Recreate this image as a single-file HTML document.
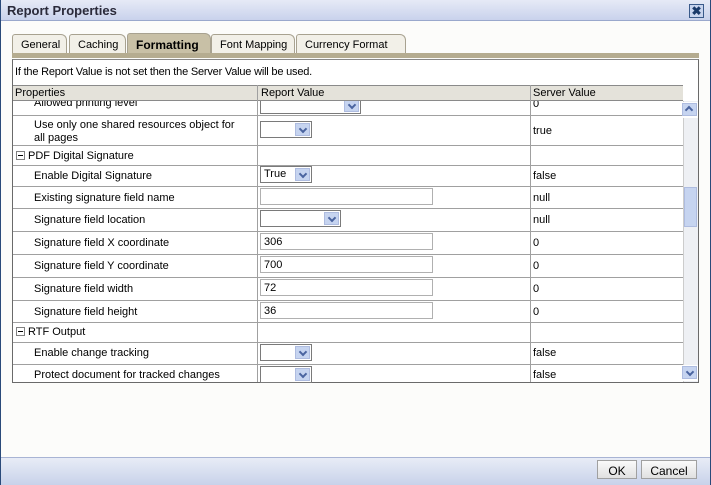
<!DOCTYPE html><html><head><style>
*{box-sizing:border-box;margin:0;padding:0}
body{width:711px;height:485px;overflow:hidden;font-family:"Liberation Sans",sans-serif;font-size:11px;color:#000;background:#fcfcfa;position:relative}
.a{position:absolute}
.win{left:0;top:0;width:711px;height:485px;border:1px solid #2a4a7a;border-top:none}
.title{left:1px;top:0;width:709px;height:21px;background:linear-gradient(#e6eaf6,#c9d2ec);border-bottom:1px solid #9aa8cc;font-weight:bold;font-size:13px;color:#2a2a3a;padding:3px 0 0 6px}
.close{left:689px;top:4px;width:15px;height:14px;border:1px solid #3a5a8a;background:#c8d4ee;color:#1a3a6a;font-size:12px;line-height:12px;text-align:center;font-weight:bold}
.tab{top:34px;height:20px;border:1px solid #a8a290;border-bottom:none;background:#f2f0e8;padding:4px 0 0 8px;border-radius:3px 6px 0 0}
.strip{left:12px;top:53px;width:687px;height:5px;background:#b5ac90}
.box{left:12px;top:59px;width:687px;height:324px;border:1px solid #6a6a6a;border-top:1px solid #888;background:#fff}
.hdr{left:13px;top:85px;width:670px;height:16px;background:#e4e2da;border-top:1px solid #8a8a8a;border-bottom:1px solid #8a8a8a}
.hl{height:1px;background:#a0a0a0;left:13px;width:670px}
.vl{width:1px;background:#a0a0a0;top:85px;height:297px}
.t{white-space:nowrap}
.sel{height:17px;border:1px solid #7a7a7a;background:#fff;padding:1px 0 0 3px}
.sel i{position:absolute;right:1px;top:1px;width:15px;height:13px;background:#c6d4f0;border:1px solid #aebce0}
.sel i:after{content:"";position:absolute;left:4px;top:2px;width:4px;height:4px;border-right:2px solid #4a64a0;border-bottom:2px solid #4a64a0;transform:rotate(45deg)}
.inp{height:17px;border:1px solid #b0b0b0;background:#fff;padding:2px 0 0 3px}
.pm{width:9px;height:9px;border:1px solid #808080;background:#fff}
.pm:after{content:"";position:absolute;left:1px;top:3px;width:5px;height:1px;background:#000}
.foot{left:1px;top:457px;width:709px;height:28px;background:linear-gradient(#e8ecf6,#c8d2ea);border-top:1px solid #a8b4d4}
.btn{top:460px;height:19px;border:1px solid #a0a0a0;background:linear-gradient(#fafafa,#e0e0e0);text-align:center;padding-top:3px;font-size:12px}
.sb{left:683px;top:101px;width:15px;height:281px;background:#eef0f4;border-left:1px solid #ccc}
</style></head><body>
<div class="a win"></div>
<div class="a title">Report Properties</div>
<div class="a close">✖</div>
<div class="a tab" style="left:12px;width:55px">General</div>
<div class="a tab" style="left:69px;width:57px">Caching</div>
<div class="a tab" style="left:127px;width:84px;background:#c8c0a6;font-weight:bold;top:33px;height:21px;font-size:12px">Formatting</div>
<div class="a tab" style="left:211px;width:84px">Font Mapping</div>
<div class="a tab" style="left:296px;width:110px">Currency Format</div>
<div class="a strip"></div>
<div class="a box"></div>
<div class="a t" style="left:15px;top:66px;font-size:11px;letter-spacing:-0.2px">If the Report Value is not set then the Server Value will be used.</div>
<div class="a hdr"></div>
<div class="a t" style="left:15px;top:87px">Properties</div>
<div class="a t" style="left:261px;top:87px">Report Value</div>
<div class="a t" style="left:533px;top:87px">Server Value</div>
<div class="a vl" style="left:257px"></div>
<div class="a vl" style="left:530px"></div>
<div class="a hl" style="top:115px"></div><div class="a hl" style="top:145px"></div><div class="a hl" style="top:165px"></div><div class="a hl" style="top:186px"></div><div class="a hl" style="top:208px"></div><div class="a hl" style="top:231px"></div><div class="a hl" style="top:254px"></div><div class="a hl" style="top:277px"></div><div class="a hl" style="top:300px"></div><div class="a hl" style="top:322px"></div><div class="a hl" style="top:342px"></div><div class="a hl" style="top:364px"></div>
<div style="position:absolute;left:13px;top:101px;width:670px;height:14px;overflow:hidden">
<div class="a t" style="left:21px;top:-4px">Allowed printing level</div>
<div class="a sel" style="left:247px;top:-4px;width:101px"><i></i></div>
<div class="a t" style="left:520px;top:-3px">0</div></div>
<div class="a t" style="left:34px;top:119px;line-height:13px">Use only one shared resources object for<br>all pages</div>
<div class="a sel" style="left:260px;top:121px;width:52px"><i></i></div>
<div class="a t" style="left:533px;top:125px">true</div>
<div class="a pm" style="left:16px;top:151px"></div><div class="a t" style="left:28px;top:150px">PDF Digital Signature</div>
<div class="a t" style="left:34px;top:170px">Enable Digital Signature</div>
<div class="a sel" style="left:260px;top:166px;width:52px">True<i></i></div>
<div class="a t" style="left:533px;top:170px">false</div>
<div class="a t" style="left:34px;top:192px">Existing signature field name</div>
<div class="a inp" style="left:260px;top:188px;width:173px"></div>
<div class="a t" style="left:533px;top:192px">null</div>
<div class="a t" style="left:34px;top:214px">Signature field location</div>
<div class="a sel" style="left:260px;top:210px;width:81px"><i></i></div>
<div class="a t" style="left:533px;top:214px">null</div>
<div class="a t" style="left:34px;top:237px">Signature field X coordinate</div>
<div class="a inp" style="left:260px;top:233px;width:173px">306</div>
<div class="a t" style="left:533px;top:237px">0</div>
<div class="a t" style="left:34px;top:260px">Signature field Y coordinate</div>
<div class="a inp" style="left:260px;top:256px;width:173px">700</div>
<div class="a t" style="left:533px;top:260px">0</div>
<div class="a t" style="left:34px;top:283px">Signature field width</div>
<div class="a inp" style="left:260px;top:279px;width:173px">72</div>
<div class="a t" style="left:533px;top:283px">0</div>
<div class="a t" style="left:34px;top:306px">Signature field height</div>
<div class="a inp" style="left:260px;top:302px;width:173px">36</div>
<div class="a t" style="left:533px;top:306px">0</div>
<div class="a pm" style="left:16px;top:327px"></div><div class="a t" style="left:28px;top:326px">RTF Output</div>
<div class="a t" style="left:34px;top:347px">Enable change tracking</div>
<div class="a sel" style="left:260px;top:344px;width:52px"><i></i></div>
<div class="a t" style="left:533px;top:347px">false</div>
<div class="a t" style="left:34px;top:369px">Protect document for tracked changes</div>
<div class="a sel" style="left:260px;top:366px;width:52px"><i></i></div>
<div class="a t" style="left:533px;top:369px">false</div>
<div class="a sb"></div>
<div class="a sel" style="left:683px;top:102px;width:15px;height:16px;border:none;padding:0"><i style="transform:rotate(180deg)"></i></div>
<div class="a" style="left:684px;top:187px;width:13px;height:40px;background:#c6d4f0;border:1px solid #aebce0"></div>
<div class="a sel" style="left:683px;top:365px;width:15px;height:16px;border:none;padding:0"><i></i></div>
<div class="a foot"></div>
<div class="a btn" style="left:597px;width:40px">OK</div>
<div class="a btn" style="left:641px;width:56px">Cancel</div>
</body></html>
